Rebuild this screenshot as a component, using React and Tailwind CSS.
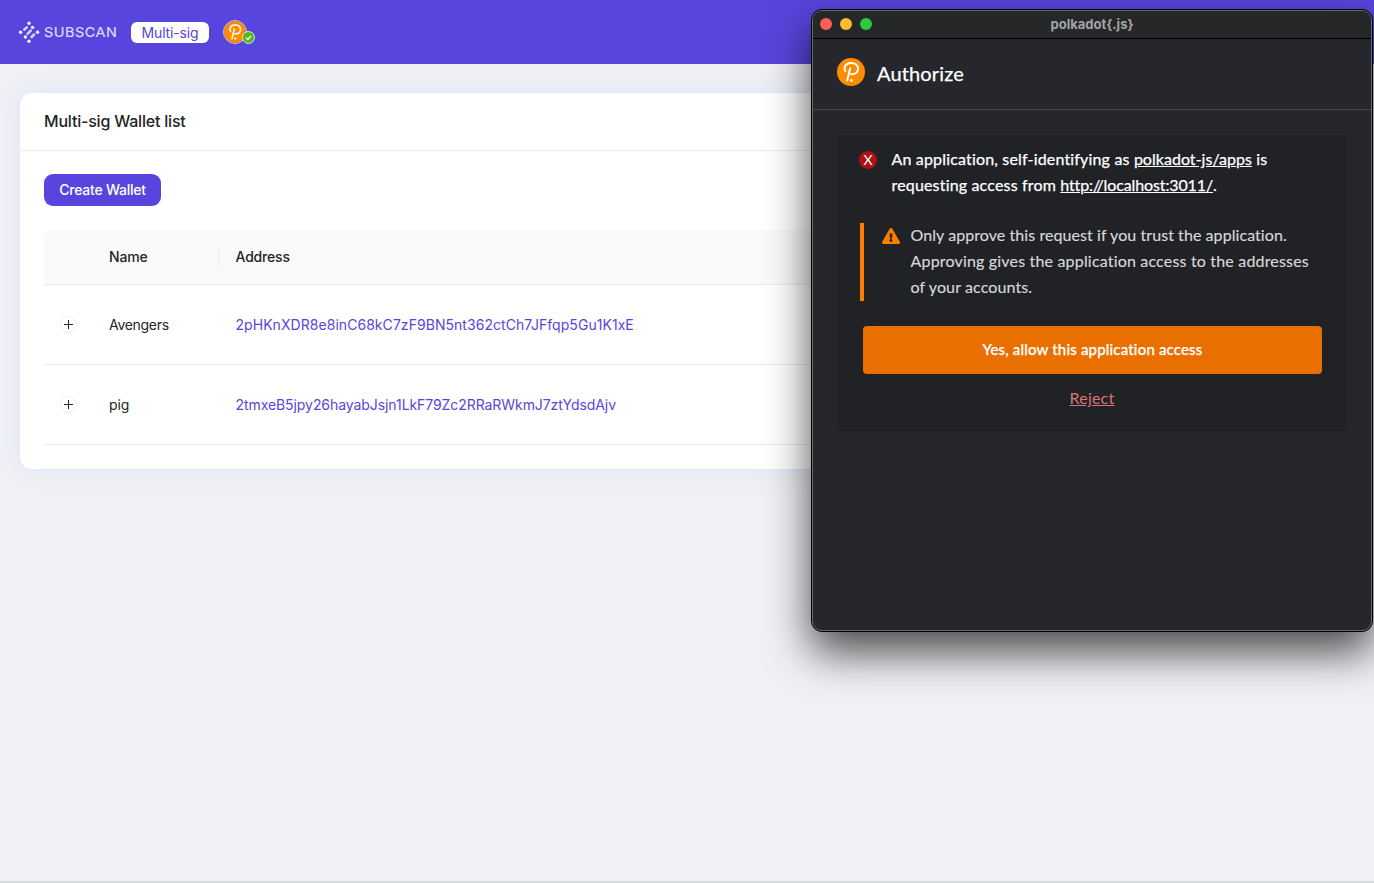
import React from "react";

const wallets = [
  { name: "Avengers", address: "2pHKnXDR8e8inC68kC7zF9BN5nt362ctCh7JFfqp5Gu1K1xE", nameTrack: "tracking-[-0.3px]", track: "tracking-[0.05px]" },
  { name: "pig", address: "2tmxeB5jpy26hayabJsjn1LkF79Zc2RRaRWkmJ7ztYdsdAjv", nameTrack: "tracking-[-0.1px]", track: "tracking-[-0.07px]" },
];

const logoDots = [
  [11, 2.2], [2.6, 11.2], [19.6, 11.2], [11, 20.2],
  [14.6, 6.4], [7.4, 16],
];

function SubscanLogo() {
  return (
    <svg className="h-[22px] w-[100px]" viewBox="0 0 100 22">
      <g stroke="#d9d4fb" strokeLinecap="round" strokeWidth="2.6">
        <path d="M6.300 8.700 8.700 6.300M9.500 12.800 12.700 9.600M13.600 16 16 13.600" />
      </g>
      <g fill="#f3f1ff">
        {logoDots.map(([x, y]) => (
          <circle key={x + "-" + y} cx={x} cy={y} r="1.700" />
        ))}
      </g>
      <text x="26" y="16.300" textLength="73.500" lengthAdjust="spacingAndGlyphs" fill="#dedafa" stroke="#dedafa" strokeWidth=".2" fontFamily="Inter, sans-serif" fontSize="13" fontWeight="400" letterSpacing=".5">
        SUBSCAN
      </text>
    </svg>
  );
}

function PolkadotMark({ className }) {
  return (
    <svg className={className} viewBox="0 0 28 28" fill="none">
      <circle cx="14" cy="14" r="14" fill="#ff8c00" />
      <path d="M8.300 13.200C6 8.700 9.300 4.900 14.200 4.900c4 0 6.900 2.600 6.900 5.900 0 3.500-3 5.900-7 5.400" stroke="#fff" strokeWidth="2" strokeLinecap="round" />
      <path d="M13.200 10.200 10.200 22.600" stroke="#fff" strokeWidth="2" strokeLinecap="round" />
      <circle cx="14.400" cy="22.500" r="1.400" fill="#fff" />
    </svg>
  );
}

function ExpandButton() {
  return (
    <svg className="h-[17px] w-[17px]" viewBox="0 0 17 17" fill="none">
      <rect x=".5" y=".5" width="16" height="16" rx="8" stroke="#f0f0f0" />
      <path d="M4 8.500h9M8.500 4v9" stroke="#222" />
    </svg>
  );
}

function Popup() {
  return (
    <div className="absolute left-[811px] top-[9px] flex h-[623px] w-[562px] flex-col rounded-[11px] border border-black bg-[#26272c] font-['Lato',sans-serif] shadow-[0_20px_44px_0_rgba(0,0,0,0.7)]">
      <div className="flex h-full flex-col overflow-hidden rounded-[10px] border border-[#67686b]">
        <div className="flex h-[28px] shrink-0 items-center border-b border-black bg-[#262729] pb-[2px] pl-[7px]">
          <div className="flex w-[60px] gap-2">
            <span className="h-3 w-3 rounded-full bg-[#ff5f57]" />
            <span className="h-3 w-3 rounded-full bg-[#febc2e]" />
            <span className="h-3 w-3 rounded-full bg-[#28c840]" />
          </div>
          <div className="flex-1 pr-[67px] text-center font-['Inter'] text-[13px] font-bold leading-4 text-[#a3a4a6]">polkadot{"{.js}"}</div>
        </div>
        <div className="flex h-[71px] shrink-0 items-center border-b border-[#44454a] pl-6">
          <PolkadotMark className="mb-1 h-7 w-7" />
          <h1 className="mb-[2px] ml-3 text-[20px] leading-7 tracking-[0.15px] text-white [-webkit-text-stroke:0.25px]">Authorize</h1>
        </div>
        <div className="mx-6 mt-[25px] h-[296px] bg-[#212226] px-[22px] pt-[11px] text-[16px] leading-[26px]">
          <div className="flex text-white">
            <span className="mr-[14.5px] mt-[5px] flex h-[18px] w-[18px] shrink-0 items-center justify-center rounded-full bg-[#af1111] text-[14px] leading-none">X</span>
            <p className="whitespace-nowrap tracking-[0.17px] [-webkit-text-stroke:0.25px]">
              <span className="block">An application, self-identifying as <span className="tracking-[0.03px] underline underline-offset-[1px]">polkadot-js/apps</span> is</span>
              <span className="block">requesting access from <span className="tracking-[-0.12px] underline underline-offset-[1px]">http://localhost:3011/</span>.</span>
            </p>
          </div>
          <div className="ml-[1px] mt-[25px] flex h-[78px] border-l-4 border-[#ff7d01] pl-[18px] text-[#d8d8da]">
            <svg className="mt-[5px] h-4 w-[18px] shrink-0" viewBox="0 0 576 512" fill="#ff7d01">
              <path d="M569.517 440.013C587.975 472.007 564.806 512 527.940 512H48.054c-36.937 0-59.999-40.055-41.577-71.987L246.423 23.985c18.467-32.009 64.720-31.951 83.154 0l239.940 416.028zM288 354c-25.405 0-46 20.595-46 46s20.595 46 46 46 46-20.595 46-46-20.595-46-46-46zm-43.673-165.346 7.418 136c.347 6.364 5.609 11.346 11.982 11.346h48.546c6.373 0 11.635-4.982 11.982-11.346l7.418-136c.375-6.874-5.098-12.654-11.982-12.654h-63.383c-6.884 0-12.356 5.780-11.981 12.654z" />
            </svg>
            <p className="-mt-px ml-[10.5px] whitespace-nowrap [-webkit-text-stroke:0.15px]">
              <span className="block tracking-[0.07px]">Only approve this request if you trust the application.</span>
              <span className="block tracking-[0.18px]">Approving gives the application access to the addresses</span>
              <span className="block tracking-[0.12px]">of your accounts.</span>
            </p>
          </div>
          <button className="ml-1 mt-[25px] flex h-12 w-[459px] items-center justify-center rounded bg-[#e86f00] pb-[2px] text-[15px] font-medium tracking-[0.17px] text-white [-webkit-text-stroke:0.25px]">Yes, allow this application access</button>
          <div className="mt-[11px] text-center tracking-[0.2px] text-[#d97575]"><a className="underline underline-offset-[1px]">Reject</a></div>
        </div>
      </div>
    </div>
  );
}

export default function App() {
  return (
    <div className="relative flex h-[883px] w-[1374px] flex-col overflow-hidden border-b-2 border-[#d8dbe0] bg-[#f0f1f5] font-['Inter',sans-serif] text-[14px] text-[#242424]">
      <header className="flex h-16 shrink-0 items-center bg-[#5845dd] pl-[18px]">
        <SubscanLogo />
        <span className="ml-[13px] mt-[1px] flex h-[21px] w-[78px] items-center justify-center rounded-[6px] bg-white tracking-[-0.15px] text-[#5845dd]">Multi-sig</span>
        <div className="relative ml-[14px] h-6 w-6">
          <PolkadotMark className="h-6 w-6 rounded-full border border-[#d9c3d8]" />
          <svg className="absolute left-[19px] top-[11px] h-[13px] w-[13px]" viewBox="0 0 13 13" fill="none">
            <circle cx="6.500" cy="6.500" r="6" fill="#52b81a" stroke="#d6e6d8" />
            <path d="m4 6.700 1.800 1.800L9 5" stroke="#fff" strokeWidth="1.300" />
          </svg>
        </div>
      </header>
      <main className="ml-5 mt-[29px] h-[376px] w-[1334px] rounded-[12px] bg-white shadow-[0_0_24px_rgba(190,205,240,0.35)]">
        <h2 className="flex h-[58px] items-center border-b border-[#ececec] pb-[2px] pl-6 text-[16px] font-medium tracking-[-0.2px]">Multi-sig Wallet list</h2>
        <div className="px-6 pt-[23px]">
          <button className="flex h-8 w-[117px] items-center justify-center rounded-[9px] bg-[#5845dd] pb-[2px] font-medium tracking-[-0.24px] text-white">Create Wallet</button>
          <div className="mt-6">
            <div className="flex h-[55px] items-center rounded-t-lg border-b border-[#ececec] bg-[#fafafa] font-medium tracking-[-0.18px]">
              <span className="w-[65px]" />
              <span className="mb-[2px] w-[109px]">Name</span>
              <span className="h-[22px] w-px bg-[#ebebeb]" />
              <span className="mb-[2px] ml-[16.500px]">Address</span>
            </div>
            {wallets.map((w) => (
              <div key={w.name} className="flex h-20 items-center border-b border-[#ececec]">
                <span className="w-[65px] pl-4"><ExpandButton /></span>
                <span className={"w-[126.500px] " + w.nameTrack}>{w.name}</span>
                <span className={"text-[#5845dd] " + w.track}>{w.address}</span>
              </div>
            ))}
          </div>
        </div>
      </main>
      <Popup />
    </div>
  );
}
